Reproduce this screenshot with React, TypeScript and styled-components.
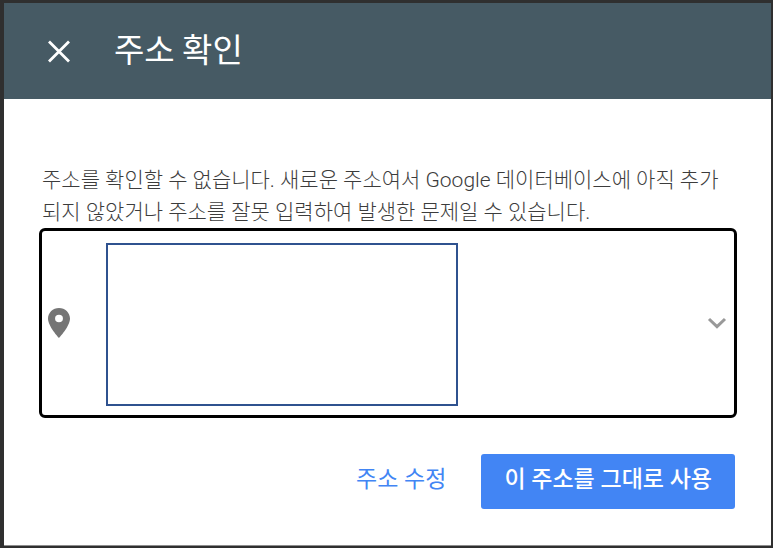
import React from "react";
import styled, { createGlobalStyle } from "styled-components";

const GlobalStyle = createGlobalStyle`
  *, *::before, *::after { box-sizing: border-box; }
  html, body, #root { height: 100%; margin: 0; }
  body {
    background: #2f2f2f;
    font-family: Roboto, "Noto Sans CJK KR", sans-serif;
  }
  button { font-family: inherit; cursor: pointer; }
`;

const Backdrop = styled.div`
  display: flex;
  min-height: 100%;
  padding: 3px 2px 2px 4px;
`;

const Dialog = styled.section`
  flex: 1;
  display: flex;
  flex-direction: column;
  background: #fff;
  border: solid #8d8d8d;
  border-width: 0 0 1px;
`;

const Header = styled.header`
  display: flex;
  align-items: center;
  gap: 38px;
  height: 96px;
  padding: 0 38px;
  background: #465a64;
  color: #fff;
`;

const CloseButton = styled.button`
  display: flex;
  padding: 0;
  border: 0;
  background: none;
  color: inherit;
`;

const Title = styled.h1`
  margin: 0;
  padding-bottom: 6px;
  font-family: "Noto Sans CJK KR", sans-serif;
  font-size: 33px;
  font-weight: 400;
  line-height: 40px;
`;

const Content = styled.div`
  flex: 1;
  display: flex;
  flex-direction: column;
  padding: 65px 34px 32px 35px;
`;

const Message = styled.p`
  margin: 0;
  padding: 0 3px;
  color: #3c3c3c;
  font-size: 21px;
  font-weight: 300;
  line-height: 32px;
`;

const AddressCard = styled.button`
  display: flex;
  align-items: center;
  width: 100%;
  padding: 12px 7px 9px 6px;
  border: 3px solid #000;
  border-radius: 6px;
  background: #fff;
  color: #757575;

  svg {
    margin-bottom: 4px;
  }
`;

const AddressBox = styled.span`
  flex: 0 1 352px;
  height: 163px;
  margin: 0 auto 0 36px;
  border: 2px solid #2f528f;
`;

const Actions = styled.footer`
  display: flex;
  justify-content: flex-end;
  gap: 12px;
  margin-top: 36px;
  padding-right: 2px;
`;

const ActionButton = styled.button<{ $primary?: boolean }>`
  height: 55px;
  padding: 0 23px 4px;
  border: 0;
  border-radius: 3px;
  background: ${(p) => (p.$primary ? "#4285f4" : "transparent")};
  color: ${(p) => (p.$primary ? "#fff" : "#4285f4")};
  font-size: 23px;
  font-weight: ${(p) => (p.$primary ? 500 : 400)};
  line-height: 32px;
`;

const CloseIcon = () => (
  <svg width="34" height="34" viewBox="0 0 34 34" aria-hidden="true">
    <path d="M7 7.5 27 27.5M27 7.5 7 27.5" fill="none" stroke="currentColor" strokeWidth="2.8" />
  </svg>
);

const PinIcon = () => (
  <svg width="22" height="30" viewBox="5 2 14 20" preserveAspectRatio="none" aria-hidden="true">
    <path
      fill="currentColor"
      d="M12 2C8.13 2 5 5.13 5 9c0 5.25 7 13 7 13s7-7.75 7-13c0-3.87-3.13-7-7-7zm0 9.500a2.500 2.500 0 0 1 0-5 2.500 2.500 0 0 1 0 5z"
    />
  </svg>
);

const ChevronIcon = () => (
  <svg width="20" height="12" viewBox="0 0 20 12" aria-hidden="true">
    <path d="M2 2 10 9.700 18 2" fill="none" stroke="#999" strokeWidth="3" />
  </svg>
);

export default function App() {
  return (
    <>
      <GlobalStyle />
      <Backdrop>
        <Dialog role="dialog" aria-labelledby="dialog-title">
          <Header>
            <CloseButton type="button" aria-label="닫기">
              <CloseIcon />
            </CloseButton>
            <Title id="dialog-title">주소 확인</Title>
          </Header>
          <Content>
            <Message>
              주소를 확인할 수 없습니다. 새로운 주소여서 Google 데이터베이스에 아직 추가되지 않았거나
              주소를 잘못 입력하여 발생한 문제일 수 있습니다.
            </Message>
            <AddressCard type="button" aria-label="주소" aria-expanded="false">
              <PinIcon />
              <AddressBox />
              <ChevronIcon />
            </AddressCard>
            <Actions>
              <ActionButton type="button">주소 수정</ActionButton>
              <ActionButton type="button" $primary>
                이 주소를 그대로 사용
              </ActionButton>
            </Actions>
          </Content>
        </Dialog>
      </Backdrop>
    </>
  );
}
